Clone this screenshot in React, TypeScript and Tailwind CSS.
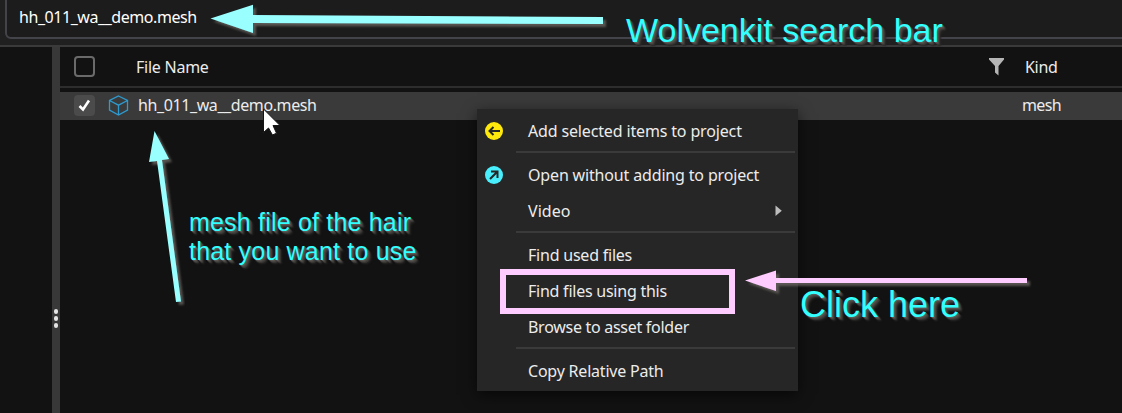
import type { ReactNode } from 'react';

function Item({ label, track, icon, submenu }: { label: string; track: string; icon?: ReactNode; submenu?: boolean }) {
  return (
    <div className="flex h-9 items-center pr-4">
      <div className="flex w-[51px] shrink-0 pl-2">{icon}</div>
      <span className={`grow whitespace-nowrap ${track}`}>{label}</span>
      {submenu && (
        <svg width="7" height="12" viewBox="0 0 7 12"><path d="M0.5 0.5 6.8 5.7 0.5 11z" fill="#bcbcbc" /></svg>
      )}
    </div>
  );
}

function Separator() {
  return <div className="mr-[3px] ml-[39px] h-2 py-[2px]"><div className="h-[2px] bg-[#3a3a3a]" /></div>;
}

const noteShadow = '[text-shadow:1px_1px_0_#5c5956,2px_2px_1px_#4c4a47,3px_3px_1px_#3a3836,4px_4px_2px_#272625]';

function Annotations() {
  return (
    <>
      <svg className="pointer-events-none absolute inset-0" width="1122" height="413" viewBox="0 0 1122 413">
        <defs>
          <filter id="shade" x="-10%" y="-50%" width="120%" height="200%">
            <feDropShadow dx="3" dy="3" stdDeviation="1" floodColor="#6b6763" floodOpacity="0.75" />
          </filter>
        </defs>
        <g fill="#99ffff">
          <path filter="url(#shade)" d="M210.500 18.500 253 4.700V15L603 17V24L253 23V33z" />
          <path filter="url(#shade)" d="M154.500 131 169 159 162 160 181 301.500 176 302 157 161 149 162z" />
        </g>
        <path filter="url(#shade)" d="M745 280.500 776 270.500V278H1027V283H776V291z" fill="#ffccff" />
        <path d="M263.500 109V132.500L268.500 128L272.500 135L276.500 133.200L273 125.500H280z" fill="#fff" stroke="#151515" strokeWidth="1" />
      </svg>
      <div className="absolute top-[269px] left-[500px] h-[45px] w-[235px] border-6 border-[#ffccff]" />
      <div className={`absolute top-[10px] left-[626px] text-[34px] leading-10 whitespace-nowrap ${noteShadow}`}>Wolvenkit search bar</div>
      <div className={`absolute top-[208px] left-[189px] text-[25px] leading-[29px] tracking-[0.19px] whitespace-nowrap ${noteShadow}`}>mesh file of the hair<br />that you want to use</div>
      <div className={`absolute top-[285px] left-[800px] text-[36px] leading-10 whitespace-nowrap ${noteShadow}`}>Click here</div>
    </>
  );
}

export default function App() {
  return (
    <div className="relative flex h-[413px] w-[1122px] flex-col overflow-hidden bg-[#121212] font-['Noto_Sans',sans-serif] text-[16px] leading-6 text-[#ececec]">
      <div className="h-[47px] shrink-0 overflow-hidden border-b-2 border-[#3a3a3a] bg-[#202020] pl-[5px]">
        <div className="-mt-2 -mr-2 flex h-[47px] items-end rounded-md border-2 border-[#43434a] bg-[#1c1c1c] pb-[8px] pl-[12px]">
          <span className="tracking-[-0.44px] whitespace-nowrap text-white">hh_011_wa__demo.mesh</span>
        </div>
      </div>
      <div className="flex min-h-0 grow">
        <div className="w-[52px] shrink-0" />
        <div className="flex w-2 shrink-0 flex-col items-center gap-[2px] bg-[#383838] pt-[262px]">
          <i className="h-[5px] w-1 shrink-0 rounded-full bg-[#e4e4e4]" />
          <i className="h-[5px] w-1 shrink-0 rounded-full bg-[#e4e4e4]" />
          <i className="h-[5px] w-1 shrink-0 rounded-full bg-[#e4e4e4]" />
        </div>
        <div className="min-w-0 grow">
          <div className="flex h-[41px] items-center border-b-2 border-[#2d2d2d] pl-[14px]">
            <div className="h-[21px] w-[21px] rounded border-2 border-[#6a6a6a]" />
            <span className="ml-[41px] w-[853px] tracking-[-0.25px]">File Name</span>
            <svg width="15" height="19" viewBox="0 0 15 19"><path d="M0 1h15v1.500L9.500 9v9.500L6 15.500V9L0 2.500z" fill="#b5b5b5" /></svg>
            <span className="ml-[21px] tracking-[-0.3px]">Kind</span>
          </div>
          <div className="mt-1 flex h-7 items-center bg-[#3a3a3a] pb-[2px] pl-[14px]">
            <div className="flex h-[21px] w-[21px] items-center justify-center rounded bg-[#4b4b4b]">
              <svg width="13" height="13" viewBox="0 0 13 13"><path d="M1.500 7 5 10.500 11 1.500" fill="none" stroke="#fff" strokeWidth="2.600" /></svg>
            </div>
            <svg className="ml-[13px]" width="21" height="21" viewBox="0 0 21 21"><path d="M10.500 1 19.500 5.500V15L10.500 20 1.500 15V5.500zM1.500 5.500 10.500 10.200 19.500 5.500M10.500 10.200V20" fill="none" stroke="#2d9bd0" strokeWidth="1.300" /></svg>
            <span className="ml-[9px] w-[884px] tracking-[-0.4px]">hh_011_wa__demo.mesh</span>
            <span className="tracking-[-0.6px]">mesh</span>
          </div>
        </div>
      </div>
      <div className="absolute top-[109px] left-[477px] h-[282px] w-[321px] bg-[#262626] pt-1 shadow-[0_4px_14px_rgba(0,0,0,0.6)]">
        <Item label="Add selected items to project" track="tracking-[-0.15px]" icon={
          <svg width="18" height="18" viewBox="0 0 18 18"><circle cx="9" cy="9" r="9" fill="#ffe90d" /><path d="M15 9H4.500M8.500 5 4.500 9l4 4" fill="none" stroke="#262626" strokeWidth="2" /></svg>
        } />
        <Separator />
        <Item label="Open without adding to project" track="tracking-[-0.16px]" icon={
          <svg width="18" height="18" viewBox="0 0 18 18"><circle cx="9" cy="9" r="9" fill="#48eefc" /><path d="M5 13 12 6M6 5.500H12.500V12" fill="none" stroke="#262626" strokeWidth="2" /></svg>
        } />
        <Item label="Video" track="tracking-[0.05px]" submenu />
        <Separator />
        <Item label="Find used files" track="tracking-[-0.22px]" />
        <Item label="Find files using this" track="tracking-[-0.24px]" />
        <Item label="Browse to asset folder" track="tracking-[-0.28px]" />
        <Separator />
        <Item label="Copy Relative Path" track="tracking-[-0.21px]" />
      </div>
      <div className="font-['Liberation_Sans',sans-serif] text-[#33ffff]"><Annotations /></div>
    </div>
  );
}
